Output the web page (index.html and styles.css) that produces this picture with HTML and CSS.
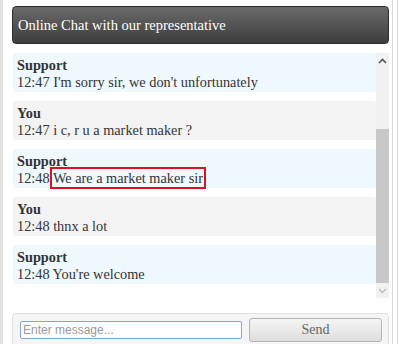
FILE: index.html
```html
<!DOCTYPE html>
<html lang="en">
<head>
    <meta charset="UTF-8">
    <title>Online Chat</title>
    <link rel="stylesheet" href="styles.css">
</head>
<body>
    <div class="frame">
        <div class="chat">
            <div class="chat-header">Online Chat with our representative</div>

            <div class="chat-body">
                <div class="messages">
                    <div class="msg support">
                        <b>Support</b>
                        <div>12:47 I'm sorry sir, we don't unfortunately</div>
                    </div>
                    <div class="msg you">
                        <b>You</b>
                        <div>12:47 i c, r u a market maker ?</div>
                    </div>
                    <div class="msg support">
                        <b>Support</b>
                        <div>12:48 <span class="highlight">We are a market maker sir</span></div>
                    </div>
                    <div class="msg you">
                        <b>You</b>
                        <div>12:48 thnx a lot</div>
                    </div>
                    <div class="msg support">
                        <b>Support</b>
                        <div>12:48 You're welcome</div>
                    </div>
                </div>
                <div class="scrollbar">
                    <div class="arrow">
                        <svg width="9" height="6" viewBox="0 0 9 6"><path d="M1 5 L4.5 1.5 L8 5" fill="none" stroke="#555" stroke-width="1.6"/></svg>
                    </div>
                    <div class="track"></div>
                    <div class="thumb"></div>
                    <div class="arrow">
                        <svg width="9" height="6" viewBox="0 0 9 6"><path d="M1 1 L4.5 4.5 L8 1" fill="none" stroke="#bbb" stroke-width="1.4"/></svg>
                    </div>
                </div>
            </div>

            <div class="chat-input">
                <input class="text-input" type="text" placeholder="Enter message...">
                <button class="send-button">Send</button>
            </div>
        </div>
    </div>
</body>
</html>
```

FILE: styles.css
```css
body {
    margin: 0;
    font-family: 'Liberation Serif', 'Times New Roman', serif;
    background-color: #fff;
}
.frame {
    height: 344px;
    width: 394px;
    border-left: 3px solid #e2e2e2;
    border-right: 1px solid #d6d6d6;
    box-shadow: inset -4px 0 0 #fff, inset -5px 0 0 #dcdcdc;
    box-sizing: content-box;
    overflow: hidden;
}
.chat {
    padding: 6px 8px 0 9px;
}
.chat-header {
    height: 36px;
    line-height: 36px;
    padding-left: 5px;
    color: #fff;
    font-size: 14.5px;
    background: linear-gradient(#6a6a6a, #3d3d3d);
    border: 1px solid #2e2e2e;
    border-radius: 4px;
}
.chat-body {
    display: flex;
    margin-top: 9px;
    height: 245px;
}
.messages {
    flex: 1;
    display: flex;
    flex-direction: column;
    gap: 9px;
    padding-left: 1px;
}
.msg {
    height: 39px;
    padding: 4px 4px 0 4px;
    box-sizing: border-box;
    border-radius: 3px;
    font-size: 14.3px;
    line-height: 17px;
    color: #333;
}
.msg b {
    color: #333;
}
.support {
    background-color: #eef8fd;
}
.you {
    background-color: #f3f3f3;
}
.highlight {
    outline: 2px solid #e01020;
    outline-offset: 1px;
}
.scrollbar {
    width: 13px;
    display: flex;
    flex-direction: column;
    background-color: #f1f1f1;
}
.arrow {
    height: 15px;
    display: flex;
    align-items: center;
    justify-content: center;
}
.track {
    height: 61px;
}
.thumb {
    flex: 1;
    background-color: #c8c8c8;
}
.chat-input {
    display: flex;
    align-items: center;
    gap: 7px;
    margin-top: 15px;
    height: 32px;
    padding: 0 6px 0 7px;
    background-color: #f5f5f5;
    border: 1px solid #e0e0e0;
    border-radius: 4px;
}
.text-input {
    width: 222px;
    height: 18px;
    box-sizing: border-box;
    border: 1px solid #7ea6de;
    border-radius: 2px;
    padding: 0 2px;
    font-family: 'Liberation Sans', Arial, sans-serif;
    font-size: 12px;
    background-color: #fff;
}
.text-input::placeholder {
    color: #999;
}
.send-button {
    flex: 1;
    height: 24px;
    border: 1px solid #b5b5b5;
    border-radius: 3px;
    background: linear-gradient(#f4f4f4, #dedede);
    color: #666;
    font-family: 'Liberation Serif', 'Times New Roman', serif;
    font-size: 14px;
}
```
